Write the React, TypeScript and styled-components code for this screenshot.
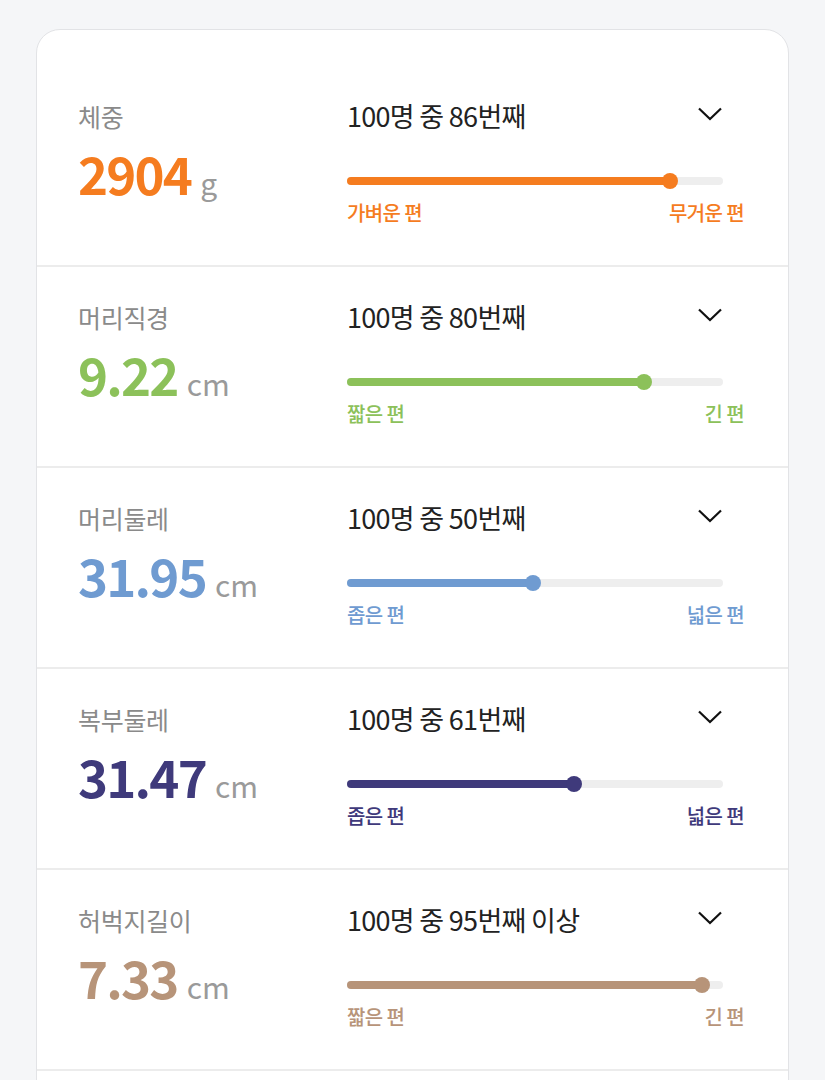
import React from 'react';
import styled, { createGlobalStyle } from 'styled-components';

const GlobalStyle = createGlobalStyle`
    html, body {
        margin: 0;
        padding: 0;
        background: #f5f6f8;
    }
    body {
        font-family: 'Noto Sans CJK KR', 'Noto Sans', sans-serif;
    }
`;

const Page = styled.div`
    padding: 29px 36px 0;
`;

const Card = styled.div`
    background: #fff;
    border: 1px solid #e2e3e6;
    border-radius: 24px;
    padding: 36px 0 36px;
`;

const Row = styled.div`
    display: flex;
    height: 199px;
    border-bottom: 2px solid #ececec;
    padding-left: 41px;
`;

const Left = styled.div`
    width: 269px;
    padding-top: 34px;
`;

const Label = styled.div`
    font-size: 25px;
    line-height: 32px;
    color: #8a8a8a;
    letter-spacing: -0.3px;
`;

const Value = styled.div`
    display: flex;
    align-items: baseline;
    margin-top: 11px;
    line-height: 60px;
`;

const Number = styled.span<{ $color: string }>`
    font-size: 51px;
    font-weight: 700;
    letter-spacing: -1.8px;
    color: ${(p) => p.$color};
`;

const Unit = styled.span`
    font-size: 30px;
    color: #9a9a9a;
    margin-left: 9px;
`;

const Right = styled.div`
    flex: 1;
    padding: 34px 44px 0 0;
`;

const Header = styled.div`
    display: flex;
    align-items: center;
    justify-content: space-between;
    margin-right: 21px;
`;

const Rank = styled.div`
    font-size: 27px;
    line-height: 32px;
    letter-spacing: -0.7px;
    color: #222;
`;

const Chevron = styled.svg`
    width: 26px;
    height: 16px;
    margin-top: -4px;
`;

const Track = styled.div`
    position: relative;
    height: 8px;
    margin: 45px 21px 0 0;
    border-radius: 4px;
    background: #eeeeee;
`;

const Fill = styled.div<{ $color: string }>`
    height: 100%;
    border-radius: 4px;
    background: ${(p) => p.$color};
`;

const Thumb = styled.div<{ $color: string }>`
    position: absolute;
    top: 50%;
    width: 16px;
    height: 16px;
    border-radius: 50%;
    background: ${(p) => p.$color};
    transform: translate(-50%, -50%);
`;

const Ends = styled.div<{ $color: string }>`
    display: flex;
    justify-content: space-between;
    margin-top: 16px;
    font-size: 20px;
    line-height: 24px;
    font-weight: 500;
    letter-spacing: -0.6px;
    color: ${(p) => p.$color};
`;

type Item = {
    label: string;
    value: string;
    unit: string;
    rank: string;
    pct: number;
    color: string;
    low: string;
    high: string;
};

const items: Item[] = [
    { label: '체중', value: '2904', unit: 'g', rank: '100명 중 86번째', pct: 86, color: '#f57c1f', low: '가벼운 편', high: '무거운 편' },
    { label: '머리직경', value: '9.22', unit: 'cm', rank: '100명 중 80번째', pct: 79, color: '#8cc15a', low: '짧은 편', high: '긴 편' },
    { label: '머리둘레', value: '31.95', unit: 'cm', rank: '100명 중 50번째', pct: 49.5, color: '#6f9bd1', low: '좁은 편', high: '넓은 편' },
    { label: '복부둘레', value: '31.47', unit: 'cm', rank: '100명 중 61번째', pct: 60.5, color: '#3f3a7b', low: '좁은 편', high: '넓은 편' },
    { label: '허벅지길이', value: '7.33', unit: 'cm', rank: '100명 중 95번째 이상', pct: 94.5, color: '#b79479', low: '짧은 편', high: '긴 편' },
];

export default function App() {
    return (
        <Page>
            <GlobalStyle />
            <Card>
                {items.map((it) => (
                    <Row key={it.label}>
                        <Left>
                            <Label>{it.label}</Label>
                            <Value>
                                <Number $color={it.color}>{it.value}</Number>
                                <Unit>{it.unit}</Unit>
                            </Value>
                        </Left>
                        <Right>
                            <Header>
                                <Rank>{it.rank}</Rank>
                                <Chevron viewBox="0 0 26 16" fill="none">
                                    <path d="M2 2.5 L13 13 L24 2.5" stroke="#111" strokeWidth="2.2" />
                                </Chevron>
                            </Header>
                            <Track>
                                <Fill $color={it.color} style={{ width: `${it.pct}%` }} />
                                <Thumb $color={it.color} style={{ left: `${it.pct}%` }} />
                            </Track>
                            <Ends $color={it.color}>
                                <span>{it.low}</span>
                                <span>{it.high}</span>
                            </Ends>
                        </Right>
                    </Row>
                ))}
            </Card>
        </Page>
    );
}
